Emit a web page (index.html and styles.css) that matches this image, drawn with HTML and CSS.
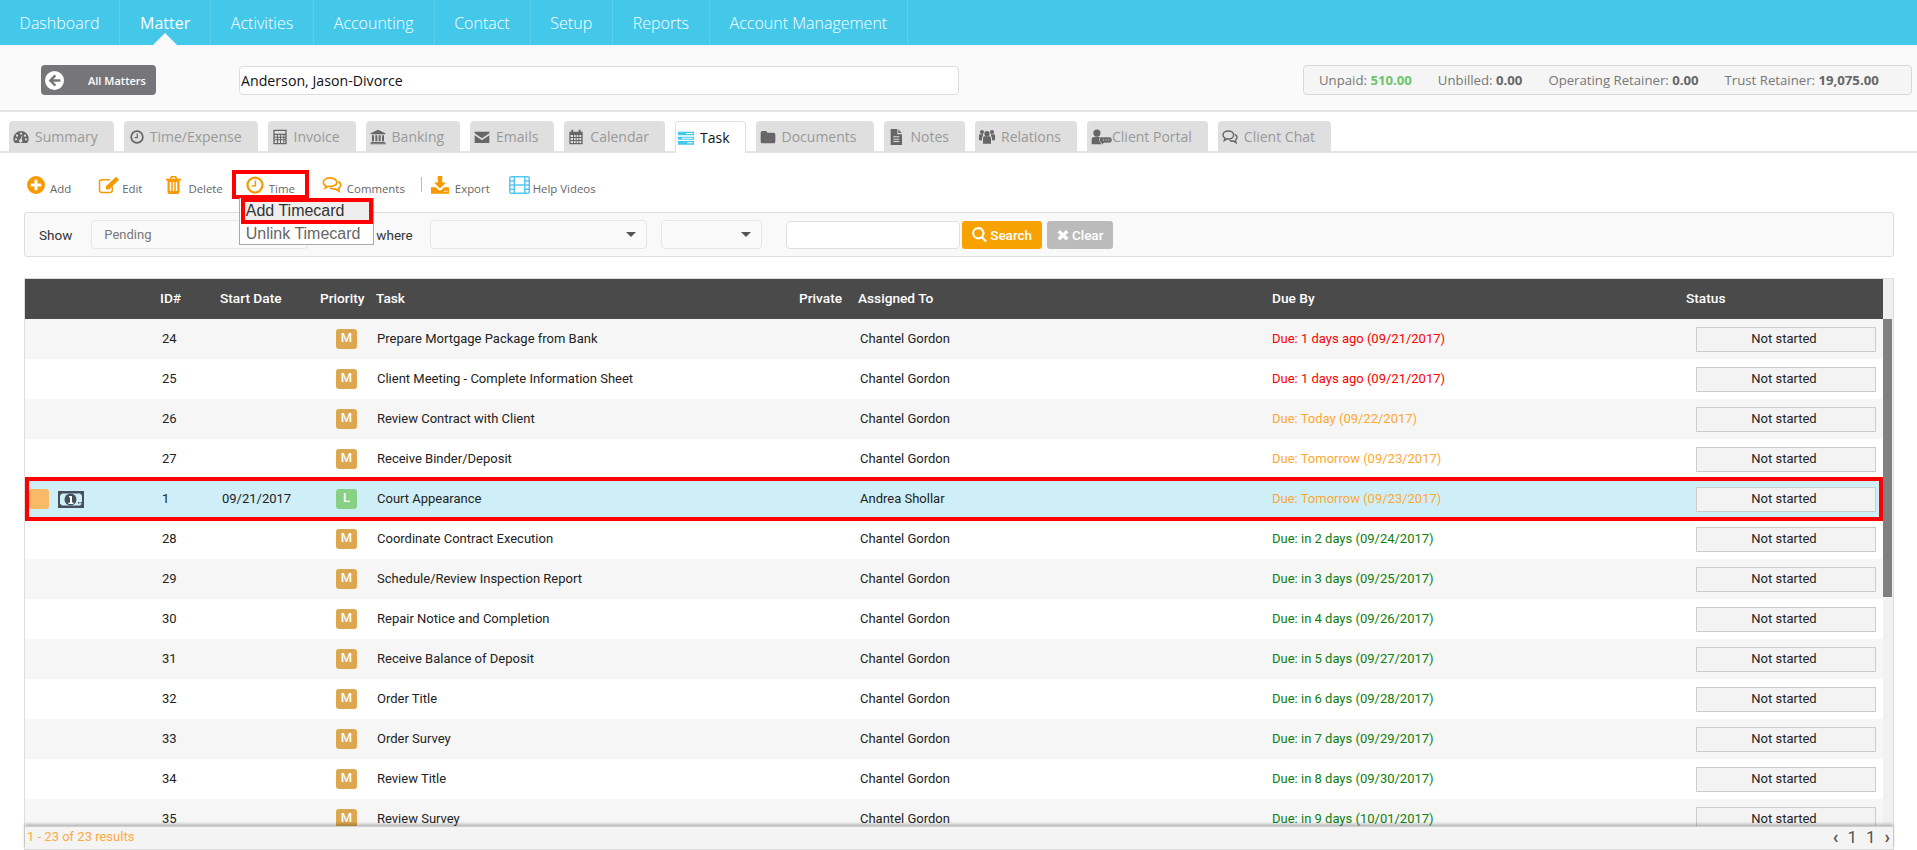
FILE: index.html
```html
<!DOCTYPE html>
<html lang="en">
<head>
<meta charset="utf-8">
<title>Matter - Task</title>
<link rel="stylesheet" href="styles.css">
</head>
<body>
<svg class="sprite" xmlns="http://www.w3.org/2000/svg">
  <symbol id="i-gauge" viewBox="0 0 24 24"><path d="M12 3A11.500 11.500 0 0 0 .5 14.500c0 2.800 1 5 2.500 6.500h18c1.500-1.500 2.500-3.700 2.500-6.500A11.500 11.500 0 0 0 12 3z"/><g fill="#dfdfdf"><circle cx="12" cy="7" r="1.700"/><circle cx="6" cy="10" r="1.700"/><circle cx="4.500" cy="15.500" r="1.700"/><circle cx="19.500" cy="15.500" r="1.700"/><circle cx="18" cy="10" r="1.700"/><path d="M14.500 8.500l-1.500 7.200a2.500 2.500 0 1 1-2.200-.3z"/></g></symbol>
  <symbol id="i-clock" viewBox="0 0 24 24"><circle cx="12" cy="12" r="10" fill="none" stroke="currentColor" stroke-width="3"/><path d="M12.500 6v7H8" fill="none" stroke="currentColor" stroke-width="2"/></symbol>
  <symbol id="i-calc" viewBox="0 0 24 24"><path fill-rule="evenodd" d="M2 1h20v22H2zM4 3v4h16V3zM4 9v2.500h3.500V9zM9 9v2.500h3V9zM13.500 9v2.500H17V9zM18.500 9v2.500H20V9zM4 13v2.500h3.500V13zM9 13v2.500h3V13zM13.500 13v2.500H17V13zM18.500 13v2.500H20V13zM4 17v4h3.500v-4zM9 17v4h3v-4zM13.500 17v4H17v-4zM18.500 17v4H20v-4z"/></symbol>
  <symbol id="i-bank" viewBox="0 0 24 24"><path d="M12 1l11 5.500V8H1V6.500zM3 9.500h3v9H3zM8 9.500h3v9H8zM13 9.500h3v9h-3zM18 9.500h3v9h-3zM1.500 19.500h21V21h-21zM.5 21.500h23V23H.500z"/></symbol>
  <symbol id="i-mail" viewBox="0 0 24 24"><path d="M1 4h22v2.500L12 14 1 6.500zM1 9.500l11 7.500 11-7.500V21H1z"/></symbol>
  <symbol id="i-cal" viewBox="0 0 24 24"><path fill-rule="evenodd" d="M2 4h3V1h3v3h8V1h3v3h3v19H2zM4 9v3h3.500V9zM9 9v3h2.500V9zM13 9v3h2.500V9zM17 9v3h3V9zM4 13.500v3h3.500v-3zM9 13.500v3h2.500v-3zM13 13.500v3h2.500v-3zM17 13.500v3h3v-3zM4 18v3h3.500v-3zM9 18v3h2.500v-3zM13 18v3h2.500v-3zM17 18v3h3v-3z"/></symbol>
  <symbol id="i-task" viewBox="0 0 24 24"><path d="M0 2.500h24v5.500H0zM0 10h24v4.500H0zM0 16.500h24V22H0z"/><path fill="#fff" d="M12 4.500h10v1.500H12zM6 11.500h16v1.500H6zM14 18.500h8V20h-8z"/></symbol>
  <symbol id="i-folder" viewBox="0 0 24 24"><path d="M1 5.500A2.500 2.500 0 0 1 3.500 3h5A2.500 2.500 0 0 1 11 5.500h9.500A2.500 2.500 0 0 1 23 8v11a2.500 2.500 0 0 1-2.500 2.500h-17A2.500 2.500 0 0 1 1 19z"/></symbol>
  <symbol id="i-file" viewBox="0 0 24 24"><path fill-rule="evenodd" d="M4 0h10v8h7v16H4zM8 11v1.500h9V11zM8 14.500V16h9v-1.500zM8 18v1.500h9V18z"/><path d="M15.500.5l5 5.500h-5z"/></symbol>
  <symbol id="i-users" viewBox="0 0 24 24"><circle cx="12" cy="7" r="4"/><circle cx="4.500" cy="4.500" r="3"/><circle cx="19.500" cy="4.500" r="3"/><path d="M6 13a3 3 0 0 1 3-2h6a3 3 0 0 1 3 2v9H6zM0 9.500a2 2 0 0 1 2-1.500h4v2.500A4 4 0 0 0 4.500 14v3H0zM24 9.500a2 2 0 0 0-2-1.500h-4v2.500a4 4 0 0 1 1.500 3.500v3H24z"/></symbol>
  <symbol id="i-portal" viewBox="0 0 32 24"><circle cx="9" cy="6" r="5.500"/><path d="M1 23v-7a4 4 0 0 1 4-4h8a4 4 0 0 1 4 4v7z"/><path d="M15 12h13a4 4 0 0 1 4 4v1a4 4 0 0 1-4 4H20l-4 3v-3a4 4 0 0 1-3-4v-2a4 4 0 0 1 2-3z" stroke="#dfdfdf"/><g fill="#dfdfdf"><circle cx="19" cy="16.500" r="1"/><circle cx="23" cy="16.500" r="1"/><circle cx="27" cy="16.500" r="1"/></g></symbol>
  <symbol id="i-chat" viewBox="0 0 24 24"><path fill="none" stroke="currentColor" stroke-width="2.200" d="M9.500 3C5 3 1.500 5.500 1.500 9c0 2 1.200 3.700 3 4.800L3.500 17l4-2.300c.7.200 1.300.3 2 .3 4.500 0 8-2.700 8-6s-3.500-6-8-6z"/><path fill="none" stroke="currentColor" stroke-width="2.200" d="M19.500 8c2 1 3 2.700 3 4.500 0 2-1 3.500-2.500 4.500l1 3.500-4-2.500c-2 .5-4 0-5.500-1"/></symbol>
  <symbol id="i-plus" viewBox="0 0 24 24"><path fill-rule="evenodd" d="M12 0a12 12 0 1 1 0 24 12 12 0 0 1 0-24zM10 5v5H5v4h5v5h4v-5h5v-4h-5V5z"/></symbol>
  <symbol id="i-edit" viewBox="0 0 28 24"><path fill="none" stroke="currentColor" stroke-width="2" d="M19 14v5a3 3 0 0 1-3 3H5a3 3 0 0 1-3-3V8a3 3 0 0 1 3-3h11"/><path d="M24 1l4 4-13 13H10.500v-4.500zM8 19"/></symbol>
  <symbol id="i-trash" viewBox="0 0 20 24"><path fill-rule="evenodd" d="M6.500 0h7l1.500 3.500h5V6h-2v15a3 3 0 0 1-3 3H5a3 3 0 0 1-3-3V6H0V3.500h5zM8 2l-.7 1.500h5.400L12 2zM5 8v12h2V8zM9 8v12h2V8zM13 8v12h2V8z"/></symbol>
  <symbol id="i-comments" viewBox="0 0 26 24"><path fill="none" stroke="currentColor" stroke-width="2.300" d="M10.500 2.500C5.500 2.500 1.500 5 1.500 8.500c0 2 1.300 3.700 3.300 4.800l-1 2.700 4.500-2.200c.8.200 1.500.2 2.200.2 5 0 9-2.400 9-5.500s-4-6-9-6z"/><path fill="none" stroke="currentColor" stroke-width="2.300" d="M21.500 7.500c2 1 3.200 2.700 3.200 4.500 0 2-1.300 3.700-3.200 4.800l1 3.500-5-3c-2.500.5-5 0-7-1.500"/></symbol>
  <symbol id="i-export" viewBox="0 0 24 24"><path d="M9 0h6v8.500h5l-8 8-8-8h5zM0 15h6.500l4 4h3l4-4H24v8.500H0z"/><path fill="#fff" d="M17.500 19.500h2V21h-2zM20.500 19.500h1.500V21h-1.500z"/></symbol>
  <symbol id="i-film" viewBox="0 0 28 24"><rect x="1" y="1" width="26" height="22" rx="2" fill="none" stroke="currentColor" stroke-width="2"/><path d="M7 1v22M21 1v22M7 12h14M1 6.500h6M1 12h6M1 17.500h6M21 6.500h6M21 12h6M21 17.500h6" fill="none" stroke="currentColor" stroke-width="2"/></symbol>
  <symbol id="i-back" viewBox="0 0 24 24"><path fill-rule="evenodd" d="M12 0a12 12 0 1 1 0 24 12 12 0 0 1 0-24zM12 4.500L4.500 12l7.500 7.500 2.200-2.200-3.700-3.700H19.500v-3.200h-9l3.700-3.700z"/></symbol>
  <symbol id="i-search" viewBox="0 0 24 24"><path fill-rule="evenodd" d="M10 0a10 10 0 0 1 8 16l6 6-2.500 2.500-6-6A10 10 0 1 1 10 0zm0 3.500a6.500 6.500 0 1 0 0 13 6.500 6.500 0 0 0 0-13z"/></symbol>
  <symbol id="i-x" viewBox="0 0 24 24"><path d="M6 2l6 6 6-6 5 5-6 5 6 6-5 5-6-6-6 6-5-5 6-6-6-5z"/></symbol>
  <symbol id="i-money" viewBox="0 0 26 17"><rect width="26" height="17" fill="#46505c"/><path fill="#cfeff8" d="M4 2.500h18l2 2v8l-2 2H4l-2-2v-8z"/><ellipse cx="12.500" cy="8.500" rx="6" ry="6" fill="#46505c"/><path fill="#fff" d="M11 5h3v6.500h1.500V13h-5v-1.500H12V6.500h-1z"/><rect x="20" y="11" width="1.500" height="1.500" fill="#46505c"/><rect x="22.500" y="11" width="1.500" height="1.500" fill="#46505c"/></symbol>
</svg>

<nav class="topnav">
  <a class="nav-item">Dashboard</a>
  <a class="nav-item nav-active">Matter</a>
  <a class="nav-item">Activities</a>
  <a class="nav-item">Accounting</a>
  <a class="nav-item">Contact</a>
  <a class="nav-item">Setup</a>
  <a class="nav-item">Reports</a>
  <a class="nav-item">Account Management</a>
</nav>

<header class="subhead">
  <button class="back-btn"><svg class="back-ic"><use href="#i-back"/></svg><span>All Matters</span></button>
  <div class="matter-input">Anderson, Jason-Divorce</div>
  <div class="summary-box">
    <span>Unpaid: <b class="paid">510.00</b></span>
    <span>Unbilled: <b>0.00</b></span>
    <span>Operating Retainer: <b>0.00</b></span>
    <span>Trust Retainer: <b>19,075.00</b></span>
  </div>
</header>

<div class="tabs">
  <a class="tab"><svg class="tab-ic"><use href="#i-gauge"/></svg>Summary</a>
  <a class="tab"><svg class="tab-ic tab-ic-sm"><use href="#i-clock"/></svg>Time/Expense</a>
  <a class="tab"><svg class="tab-ic"><use href="#i-calc"/></svg>Invoice</a>
  <a class="tab"><svg class="tab-ic"><use href="#i-bank"/></svg>Banking</a>
  <a class="tab"><svg class="tab-ic"><use href="#i-mail"/></svg>Emails</a>
  <a class="tab"><svg class="tab-ic"><use href="#i-cal"/></svg>Calendar</a>
  <a class="tab tab-active"><svg class="tab-ic"><use href="#i-task"/></svg>Task</a>
  <a class="tab tab-docs"><svg class="tab-ic"><use href="#i-folder"/></svg>Documents</a>
  <a class="tab"><svg class="tab-ic"><use href="#i-file"/></svg>Notes</a>
  <a class="tab"><svg class="tab-ic"><use href="#i-users"/></svg>Relations</a>
  <a class="tab tab-tight"><svg class="tab-ic tab-ic-wide"><use href="#i-portal"/></svg>Client Portal</a>
  <a class="tab"><svg class="tab-ic"><use href="#i-chat"/></svg>Client Chat</a>
</div>

<div class="toolbar">
  <a class="tool tool-add"><svg class="tool-ic"><use href="#i-plus"/></svg>Add</a>
  <a class="tool tool-edit"><svg class="tool-ic ic-21"><use href="#i-edit"/></svg>Edit</a>
  <a class="tool tool-del"><svg class="tool-ic ic-15"><use href="#i-trash"/></svg>Delete</a>
  <div class="tool tool-time">
    <svg class="tool-ic"><use href="#i-clock"/></svg>Time
    <div class="menu">
      <div class="menu-item menu-hot">Add Timecard</div>
      <div class="menu-item">Unlink Timecard</div>
    </div>
  </div>
  <a class="tool tool-com"><svg class="tool-ic ic-20"><use href="#i-comments"/></svg>Comments</a>
  <span class="tool-sep"></span>
  <a class="tool tool-exp"><svg class="tool-ic ic-20"><use href="#i-export"/></svg>Export</a>
  <a class="tool tool-help"><svg class="tool-ic ic-film"><use href="#i-film"/></svg>Help Videos</a>
</div>

<div class="filter">
  <span class="flabel">Show</span>
  <div class="fselect fs-show">Pending</div>
  <span class="flabel fwhere">where</span>
  <div class="fselect fs-where"><i class="caret"></i></div>
  <div class="fselect fs-op"><i class="caret"></i></div>
  <div class="ftext"></div>
  <button class="btn btn-search"><svg class="btn-ic"><use href="#i-search"/></svg>Search</button>
  <button class="btn btn-clear"><svg class="btn-ic btn-ic-x"><use href="#i-x"/></svg>Clear</button>
</div>

<section class="grid">
  <div class="grid-head">
    <div class="row row-head">
      <div></div><div>ID#</div><div>Start Date</div><div>Priority</div><div>Task</div><div>Private</div><div>Assigned To</div><div>Due By</div><div>Status</div>
    </div>
    <div class="head-track"></div>
  </div>
  <div class="grid-body">
    <div class="rows">
      <div class="row"><div></div><div class="c">24</div><div class="c"></div><div class="cb"><span class="badge">M</span></div><div class="c ct">Prepare Mortgage Package from Bank</div><div></div><div class="c">Chantel Gordon</div><div class="c d-red">Due: 1 days ago (09/21/2017)</div><div class="cs"><span class="status">Not started</span></div></div>
      <div class="row"><div></div><div class="c">25</div><div class="c"></div><div class="cb"><span class="badge">M</span></div><div class="c ct">Client Meeting - Complete Information Sheet</div><div></div><div class="c">Chantel Gordon</div><div class="c d-red">Due: 1 days ago (09/21/2017)</div><div class="cs"><span class="status">Not started</span></div></div>
      <div class="row"><div></div><div class="c">26</div><div class="c"></div><div class="cb"><span class="badge">M</span></div><div class="c ct">Review Contract with Client</div><div></div><div class="c">Chantel Gordon</div><div class="c d-org">Due: Today (09/22/2017)</div><div class="cs"><span class="status">Not started</span></div></div>
      <div class="row"><div></div><div class="c">27</div><div class="c"></div><div class="cb"><span class="badge">M</span></div><div class="c ct">Receive Binder/Deposit</div><div></div><div class="c">Chantel Gordon</div><div class="c d-org">Due: Tomorrow (09/23/2017)</div><div class="cs"><span class="status">Not started</span></div></div>
      <div class="row row-hot"><div class="cflags"><span class="flag"></span><svg class="money"><use href="#i-money"/></svg></div><div class="c">1</div><div class="c">09/21/2017</div><div class="cb"><span class="badge badge-l">L</span></div><div class="c ct">Court Appearance</div><div></div><div class="c">Andrea Shollar</div><div class="c d-org">Due: Tomorrow (09/23/2017)</div><div class="cs"><span class="status">Not started</span></div></div>
      <div class="row"><div></div><div class="c">28</div><div class="c"></div><div class="cb"><span class="badge">M</span></div><div class="c ct">Coordinate Contract Execution</div><div></div><div class="c">Chantel Gordon</div><div class="c d-grn">Due: in 2 days (09/24/2017)</div><div class="cs"><span class="status">Not started</span></div></div>
      <div class="row"><div></div><div class="c">29</div><div class="c"></div><div class="cb"><span class="badge">M</span></div><div class="c ct">Schedule/Review Inspection Report</div><div></div><div class="c">Chantel Gordon</div><div class="c d-grn">Due: in 3 days (09/25/2017)</div><div class="cs"><span class="status">Not started</span></div></div>
      <div class="row"><div></div><div class="c">30</div><div class="c"></div><div class="cb"><span class="badge">M</span></div><div class="c ct">Repair Notice and Completion</div><div></div><div class="c">Chantel Gordon</div><div class="c d-grn">Due: in 4 days (09/26/2017)</div><div class="cs"><span class="status">Not started</span></div></div>
      <div class="row"><div></div><div class="c">31</div><div class="c"></div><div class="cb"><span class="badge">M</span></div><div class="c ct">Receive Balance of Deposit</div><div></div><div class="c">Chantel Gordon</div><div class="c d-grn">Due: in 5 days (09/27/2017)</div><div class="cs"><span class="status">Not started</span></div></div>
      <div class="row"><div></div><div class="c">32</div><div class="c"></div><div class="cb"><span class="badge">M</span></div><div class="c ct">Order Title</div><div></div><div class="c">Chantel Gordon</div><div class="c d-grn">Due: in 6 days (09/28/2017)</div><div class="cs"><span class="status">Not started</span></div></div>
      <div class="row"><div></div><div class="c">33</div><div class="c"></div><div class="cb"><span class="badge">M</span></div><div class="c ct">Order Survey</div><div></div><div class="c">Chantel Gordon</div><div class="c d-grn">Due: in 7 days (09/29/2017)</div><div class="cs"><span class="status">Not started</span></div></div>
      <div class="row"><div></div><div class="c">34</div><div class="c"></div><div class="cb"><span class="badge">M</span></div><div class="c ct">Review Title</div><div></div><div class="c">Chantel Gordon</div><div class="c d-grn">Due: in 8 days (09/30/2017)</div><div class="cs"><span class="status">Not started</span></div></div>
      <div class="row"><div></div><div class="c">35</div><div class="c"></div><div class="cb"><span class="badge">M</span></div><div class="c ct">Review Survey</div><div></div><div class="c">Chantel Gordon</div><div class="c d-grn">Due: in 9 days (10/01/2017)</div><div class="cs"><span class="status">Not started</span></div></div>
    </div>
    <div class="scrollbar"><div class="thumb"></div></div>
  </div>
  <footer class="grid-foot">
    <span class="results">1 - 23 of 23 results</span>
    <span class="pager"><span class="chev">‹</span><span>1</span><span>1</span><span class="chev">›</span></span>
  </footer>
</section>
</body>
</html>
```

FILE: styles.css
```css
* { box-sizing: border-box; }
html, body { margin: 0; padding: 0; height: 850px; overflow: hidden; background: #fff; }
body { font-family: "Open Sans", sans-serif; color: #333; }
.sprite { position: absolute; width: 0; height: 0; }
svg { fill: currentColor; flex: none; }

/* top nav */
.topnav { display: flex; height: 45px; background: #44c8ea; }
.nav-item { position: relative; display: flex; align-items: center; padding: 0 20px 0 19.6px; color: #fff; font-size: 16px; font-weight: 300; border-right: 1px solid rgba(255,255,255,.13); }
.nav-active { font-weight: 400; }
.nav-active::after { content: ""; position: absolute; left: 50%; bottom: 0; margin-left: -12px; border: 12px solid transparent; border-top: 0; border-bottom-color: #fafafa; }

/* sub header */
.subhead { display: flex; align-items: center; height: 67px; padding: 5px 5px 0 41px; background: #fafafa; border-bottom: 2px solid #e4e4e4; }
.back-btn { display: flex; align-items: center; width: 115px; height: 30px; padding: 0 0 0 4px; border: 0; border-radius: 4px; background: #76767a; color: #fff; font: 600 11px "Open Sans", sans-serif; }
.back-ic { width: 19px; height: 19px; }
.back-btn span { margin-left: 24px; }
.matter-input { width: 720px; height: 29px; margin-left: 83px; padding-left: 1px; line-height: 27px; background: #fff; border: 1px solid #ddd; border-radius: 4px; color: #111; font-size: 14.2px; }
.summary-box { display: flex; gap: 26px; align-items: center; width: 609px; height: 30px; margin-left: auto; padding-left: 15px; background: #f5f5f5; border: 1px solid #d8d8d8; border-radius: 4px; color: #777; font-size: 13.2px; white-space: nowrap; }
.summary-box b { color: #666; font-weight: 700; }
.summary-box .paid { color: #6cc56c; }

/* tabs */
.tabs { display: flex; gap: 10px; height: 41px; padding: 9px 0 0 9px; border-bottom: 2px solid #e4e4e4; }
.tab { display: flex; flex: none; align-items: center; gap: 6px; height: 31px; padding: 0 16px 0 4px; background: #dfdfdf; border-radius: 4px 4px 0 0; color: #999; font-size: 14px; white-space: nowrap; }
.tab svg { color: #666; }
.tab-ic { width: 16px; height: 16px; }
.tab-ic-sm { width: 14px; height: 14px; margin-left: 2px; }
.tab-ic-wide { width: 21px; height: 16px; }
.tab-tight { gap: 0; }
.tab-docs { padding-right: 18px; }
.tab-active { height: 32px; padding: 0 15px 0 2px; background: #fff; border: 1px solid #e0e0e0; border-bottom: 0; color: #111; }
.tab-active svg { color: #44c8ea; }

/* toolbar */
.toolbar { display: flex; align-items: center; height: 59px; padding: 4px 0 0 27px; color: #666; font-size: 11.4px; position: relative; z-index: 5; }
.tool { display: flex; align-items: center; gap: 5px; padding-top: 8px; }
.tool-ic { width: 18px; height: 18px; color: #f79a00; position: relative; top: -4px; }
.ic-21 { width: 21px; }
.ic-15 { width: 15px; }
.ic-20 { width: 20px; }
.ic-film { width: 23px; color: #56c8ee; }
.tool-edit { margin-left: 27px; gap: 3px; }
.tool-del { margin-left: 24px; gap: 7px; }
.tool-time { position: relative; height: 29px; margin-left: 9px; padding: 8px 10px 0; border: 4px solid #f00; }
.tool-com { margin-left: 13px; }
.tool-sep { width: 1px; height: 15px; margin-left: 16px; background: #bbb; }
.tool-exp { margin-left: 8px; }
.tool-help { margin-left: 18px; gap: 2px; }
.menu { position: absolute; left: 3px; top: 24px; width: 135px; height: 47px; background: #fff; border: 1px solid #aaa; border-top: 0; font: 16px "Liberation Sans", sans-serif; color: #666; }
.menu-item { height: 21px; padding-left: 6px; line-height: 20px; white-space: nowrap; }
.menu-hot { height: 26px; margin-left: 1px; padding-left: 1px; line-height: 18px; background: #eee; border: 4px solid #f00; color: #333; }

/* filter */
.filter { display: flex; align-items: center; width: 1870px; height: 45px; margin-left: 24px; padding-left: 14px; background: #f9f9f9; border: 1px solid #ddd; border-radius: 3px; font: 13px Roboto, sans-serif; }
.flabel { font-size: 13.5px; }
.fselect { display: flex; align-items: center; justify-content: space-between; height: 29px; padding: 0 12px; background: #fafafa; border: 1px solid #e6e6e6; border-radius: 4px; color: #777; }
.fs-show { width: 217px; margin-left: 19px; }
.fwhere { margin-left: 68px; }
.fs-where { width: 217px; margin-left: 17.5px; justify-content: flex-end; }
.fs-op { width: 101px; margin-left: 14px; justify-content: flex-end; }
.caret { width: 0; height: 0; margin-right: -2px; border: 5px solid transparent; border-top: 5px solid #555; border-bottom: 0; }
.ftext { width: 174px; height: 28px; margin-left: 24px; background: #fff; border: 1px solid #e0e0e0; border-radius: 4px; }
.btn { display: flex; align-items: center; justify-content: center; gap: 3px; height: 28px; border: 0; border-radius: 3px; color: #fff; font: 500 13.5px Roboto, sans-serif; }
.btn-search { width: 80px; margin-left: 2px; background: #f7a200; }
.btn-clear { width: 66px; margin-left: 5px; background: #bbb; }
.btn-ic { width: 15px; height: 15px; }
.btn-ic-x { width: 12px; height: 12px; }

/* grid */
.grid { width: 1870px; height: 572px; margin: 21px 0 0 24px; border: 1px solid #ddd; font: 13px Roboto, sans-serif; color: #222; }
.row { display: grid; grid-template-columns: 135px 60px 100px 56px 423px 59px 414px 414px 197px; align-items: center; height: 40px; }
.grid-head { display: flex; }
.row-head { flex: none; width: 1858px; padding-bottom: 2px; background: #4a4a4a; color: #fff; font-size: 13.7px; font-weight: 500; }
.head-track { flex: 1; background: #eee; }
.grid-body { display: flex; height: 507px; overflow: hidden; }
.rows { flex: none; width: 1858px; }
.rows .row:nth-child(odd) { background: #f6f6f6; }
.rows .row:nth-child(even) { background: #fff; }
.rows .row.row-hot { position: relative; z-index: 1; background: #cfeff8; }
.row-hot::after { content: ""; position: absolute; inset: -2px 0; border: 4px solid #f00; pointer-events: none; }
.c { padding: 0 0 2px 2px; white-space: nowrap; }
.ct { padding-left: 1px; }
.cb { padding-left: 16px; display: flex; }
.cs { padding-left: 10px; display: flex; }
.cflags { display: flex; align-items: center; gap: 9px; padding-left: 4px; }
.flag { width: 20px; height: 20px; border-radius: 3px; background: #f9b966; }
.money { width: 26px; height: 17px; }
.badge { width: 21px; height: 20px; padding-top: 1px; border-radius: 3px; background: #dda74f; color: #fff; font-weight: 500; line-height: 15px; text-align: center; }
.badge-l { background: #88d084; }
.status { width: 180px; height: 25px; line-height: 21px; padding-right: 4px; text-align: center; background: #f3f3f3; border: 1px solid #ccc; color: #222; }
.c.d-red { color: #f00; padding-left: 0; }
.c.d-org { color: #ffa733; padding-left: 0; }
.c.d-grn { color: #0e800e; padding-left: 0; }
.scrollbar { flex: 1; background: #f1f1f1; }
.thumb { width: 9px; height: 278px; background: #808083; }
.grid-foot { position: relative; display: flex; align-items: center; justify-content: space-between; height: 23px; padding: 0 3px 3px 2px; background: #f4f4f4; box-shadow: 0 -2px 3px rgba(0,0,0,.25); border-top: 1px solid #ccc; }
.results { color: #ffa940; }
.pager { display: flex; align-items: center; gap: 9px; color: #555; font-size: 17px; }
.chev { font-size: 18px; font-weight: 700; }
```
